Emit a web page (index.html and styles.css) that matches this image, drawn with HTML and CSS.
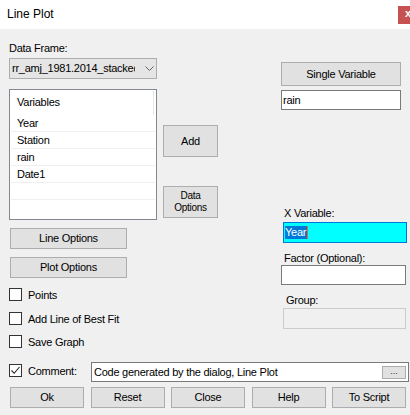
FILE: index.html
```html
<!DOCTYPE html>
<html>
<head>
<meta charset="utf-8">
<link rel="stylesheet" href="styles.css">
</head>
<body>
<div class="titlebar">
  <span class="title">Line Plot</span>
  <span class="close">x</span>
</div>
<div class="main">
  <div class="left">
    <div class="label df-label">Data Frame:</div>
    <div class="combo">
      <span class="combo-text">rr_amj_1981.2014_stacked</span>
      <svg class="chev" width="9" height="5" viewBox="0 0 9 5"><path d="M0.5 0.5 L4.5 4.5 L8.5 0.5" fill="none" stroke="#606060" stroke-width="1"/></svg>
    </div>
    <div class="list-row">
      <div class="listbox">
        <div class="list-header"><div class="hcell">Variables</div></div>
        <div class="row">Year</div>
        <div class="row">Station</div>
        <div class="row">rain</div>
        <div class="row">Date1</div>
        <div class="row"></div>
        <div class="row last"></div>
      </div>
      <div class="side">
        <div class="btn add-btn">Add</div>
        <div class="btn data-btn"><span>Data<br>Options</span></div>
      </div>
    </div>
    <div class="btn opt-btn line-btn">Line Options</div>
    <div class="btn opt-btn plot-btn">Plot Options</div>
    <div class="check cb-points"><span class="box"></span><span class="ctext">Points</span></div>
    <div class="check cb-fit"><span class="box"></span><span class="ctext">Add Line of Best Fit</span></div>
    <div class="check cb-save"><span class="box"></span><span class="ctext">Save Graph</span></div>
  </div>
  <div class="right">
    <div class="btn single-btn">Single Variable</div>
    <div class="textbox rain-box">rain</div>
    <div class="label x-label">X Variable:</div>
    <div class="textbox x-box"><span class="sel">Year</span><span class="caret"></span></div>
    <div class="label f-label">Factor (Optional):</div>
    <div class="textbox f-box"></div>
    <div class="label g-label">Group:</div>
    <div class="textbox g-box"></div>
  </div>
</div>
<div class="comment-row">
  <div class="check cb-comment">
    <span class="box checked"><svg width="11" height="11" viewBox="0 0 11 11"><path d="M1.5 5.5 L4.2 8.3 L9.5 2" fill="none" stroke="#222" stroke-width="1.1"/></svg></span>
    <span class="ctext">Comment:</span>
  </div>
  <div class="textbox comment-box">
    <span class="comment-text">Code generated by the dialog, Line Plot</span>
    <span class="dots">...</span>
  </div>
</div>
<div class="buttons">
  <div class="btn bottom-btn">Ok</div>
  <div class="btn bottom-btn">Reset</div>
  <div class="btn bottom-btn">Close</div>
  <div class="btn bottom-btn">Help</div>
  <div class="btn bottom-btn">To Script</div>
</div>
</body>
</html>
```
FILE: styles.css
```css
* { box-sizing: border-box; }
html, body { margin: 0; }
body {
  background: #f0f0f0;
  font-family: "Liberation Sans", Arial, sans-serif;
  font-size: 11px;
  letter-spacing: -0.25px;
  color: #000;
  width: 410px;
  height: 415px;
  overflow: hidden;
}
.titlebar {
  height: 29px;
  background: #fff;
  display: flex;
  justify-content: space-between;
  align-items: flex-start;
  letter-spacing: 0;
}
.title {
  font-size: 12px;
  line-height: 14px;
  margin-left: 7px;
  margin-top: 7px;
}
.close {
  width: 12px;
  height: 18px;
  margin-top: 6px;
  background: #c75050;
  color: #fff;
  font-weight: bold;
  font-size: 11px;
  line-height: 14px;
  padding-left: 7px;
  overflow: hidden;
}
.main {
  display: flex;
  padding-left: 9px;
}
.left {
  width: 209px;
  display: flex;
  flex-direction: column;
  align-items: flex-start;
}
.right {
  margin-left: 63px;
  width: 127px;
  display: flex;
  flex-direction: column;
  align-items: flex-start;
}
.label { line-height: 13px; white-space: nowrap; }
.df-label { margin-top: 13px; }
.combo {
  margin-top: 3px;
  width: 148px;
  height: 21px;
  background: #e5e5e5;
  border: 1px solid #adadad;
  display: flex;
  align-items: center;
}
.combo-text {
  margin-left: 2px;
  width: 123px;
  overflow: hidden;
  white-space: nowrap;
  line-height: 13px;
}
.chev { margin-left: 10px; }
.list-row {
  display: flex;
  margin-top: 10px;
}
.listbox {
  width: 148px;
  height: 131px;
  border: 1px solid #828790;
  background: #fff;
  overflow: hidden;
}
.list-header {
  height: 25px;
  padding-top: 1px;
}
.hcell {
  width: 144px;
  height: 24px;
  border-right: 1px solid #e5e5e5;
  padding-left: 7px;
  padding-top: 5px;
  line-height: 13px;
}
.row {
  height: 17px;
  margin: 0 1px;
  width: 144px;
  border-bottom: 1px solid #efefef;
  padding-left: 6px;
  padding-top: 1px;
  line-height: 15px;
}
.row.last { border-bottom: none; }
.side {
  margin-left: 6px;
  display: flex;
  flex-direction: column;
}
.btn {
  background: #e1e1e1;
  border: 1px solid #adadad;
  display: flex;
  align-items: center;
  justify-content: center;
  text-align: center;
  white-space: nowrap;
  line-height: 13px;
}
.add-btn {
  margin-top: 36px;
  width: 55px;
  height: 32px;
}
.data-btn {
  margin-top: 29px;
  width: 55px;
  height: 32px;
  font-size: 10px;
  line-height: 12px;
}
.opt-btn {
  margin-left: 1px;
  width: 117px;
  height: 21px;
}
.line-btn { margin-top: 8px; }
.plot-btn { margin-top: 8px; }
.check {
  display: flex;
  align-items: flex-start;
  height: 13px;
}
.box {
  width: 13px;
  height: 13px;
  border: 1px solid #333;
  background: #fff;
  display: flex;
  align-items: center;
  justify-content: center;
}
.ctext {
  margin-left: 6px;
  line-height: 13px;
  margin-top: 1px;
  white-space: nowrap;
}
.cb-points { margin-top: 10px; }
.cb-fit { margin-top: 11px; }
.cb-save { margin-top: 10px; }
.textbox {
  background: #fff;
  border: 1px solid #7a7a7a;
  line-height: 13px;
  padding-left: 1px;
  display: flex;
  align-items: center;
  white-space: nowrap;
}
.single-btn {
  margin-top: 33px;
  width: 120px;
  height: 24px;
}
.rain-box {
  margin-top: 4px;
  width: 120px;
  height: 20px;
}
.x-label { margin-top: 97px; margin-left: 3px; }
.x-box {
  margin-top: 2px;
  margin-left: 2px;
  width: 124px;
  height: 21px;
  background: #00ffff;
  border-color: #0078d7;
}
.sel {
  background: #0078d7;
  color: #fff;
  line-height: 13px;
  padding-right: 1px;
}
.caret {
  width: 1px;
  height: 13px;
  background: #e86a1a;
}
.f-label { margin-top: 9px; margin-left: 3px; }
.f-box {
  width: 125px;
  height: 20px;
}
.g-label { margin-top: 9px; margin-left: 5px; }
.g-box {
  margin-top: 1px;
  margin-left: 2px;
  width: 123px;
  height: 21px;
  background: #f0f0f0;
  border-color: #cccccc;
}
.comment-row {
  display: flex;
  align-items: flex-start;
  margin-top: 14px;
  padding-left: 9px;
}
.cb-comment {
  margin-top: 2px;
  width: 82px;
}
.comment-box {
  width: 318px;
  height: 20px;
  padding-left: 2px;
  padding-right: 2px;
  justify-content: space-between;
}
.dots {
  width: 24px;
  height: 13px;
  background: #e1e1e1;
  border: 1px solid #adadad;
  font-size: 9px;
  line-height: 9px;
  text-align: center;
  letter-spacing: 0;
  color: #333;
}
.buttons {
  display: flex;
  gap: 6.5px;
  margin-top: 5px;
  padding-left: 10px;
}
.bottom-btn {
  width: 74px;
  height: 21px;
}
```
